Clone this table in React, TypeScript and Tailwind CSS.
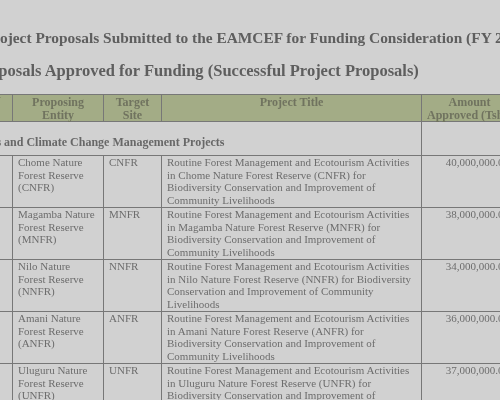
const rows = [
  {
    entity: "Chome Nature Forest Reserve (CNFR)",
    site: "CNFR",
    title:
      "Routine Forest Management and Ecotourism Activities in Chome Nature Forest Reserve (CNFR) for Biodiversity Conservation and Improvement of Community Livelihoods",
    amount: "40,000,000.00",
  },
  {
    entity: "Magamba Nature Forest Reserve (MNFR)",
    site: "MNFR",
    title:
      "Routine Forest Management and Ecotourism Activities in Magamba Nature Forest Reserve (MNFR) for Biodiversity Conservation and Improvement of Community Livelihoods",
    amount: "38,000,000.00",
  },
  {
    entity: "Nilo Nature Forest Reserve (NNFR)",
    site: "NNFR",
    title:
      "Routine Forest Management and Ecotourism Activities in Nilo Nature Forest Reserve (NNFR) for Biodiversity Conservation and Improvement of Community Livelihoods",
    amount: "34,000,000.00",
  },
  {
    entity: "Amani Nature Forest Reserve (ANFR)",
    site: "ANFR",
    title:
      "Routine Forest Management and Ecotourism Activities in Amani Nature Forest Reserve (ANFR) for Biodiversity Conservation and Improvement of Community Livelihoods",
    amount: "36,000,000.00",
  },
  {
    entity: "Uluguru Nature Forest Reserve (UNFR)",
    site: "UNFR",
    title:
      "Routine Forest Management and Ecotourism Activities in Uluguru Nature Forest Reserve (UNFR) for Biodiversity Conservation and Improvement of Community Livelihoods",
    amount: "37,000,000.00",
  },
];

export default function App() {
  return (
    <div className="h-[400px] w-[500px] overflow-hidden bg-[#d1d1d1] font-['Liberation_Serif',serif] text-[#6d6d6d] blur-[0.4px]">
      <h1 className="-ml-[16px] mt-[28px] whitespace-nowrap text-[15.4px] font-bold leading-[20px] text-[#5e5e5e]">
        Project Proposals Submitted to the EAMCEF for Funding Consideration (FY 2023/2024)
      </h1>
      <h2 className="-ml-[27px] mt-[13px] whitespace-nowrap text-[16.5px] font-bold leading-[20px] text-[#5e5e5e]">
        Proposals Approved for Funding (Successful Project Proposals)
      </h2>

      <table className="-ml-[30px] mt-[13px] w-[547px] table-fixed border-collapse text-[11px] leading-[12.65px]">
        <colgroup>
          <col className="w-[42px]" />
          <col className="w-[91px]" />
          <col className="w-[58px]" />
          <col className="w-[260px]" />
          <col className="w-[96px]" />
        </colgroup>
        <thead>
          <tr className="h-[27px] bg-[#a3ac86] text-[12px] leading-[12.5px] text-[#70735f]">
            <th className="border border-[#777] px-1 align-top font-bold">S/N</th>
            <th className="border border-[#777] px-1 pt-[1px] align-top font-bold">
              Proposing Entity
            </th>
            <th className="border border-[#777] px-1 pt-[1px] align-top font-bold">
              Target Site
            </th>
            <th className="border border-[#777] px-1 pt-[1px] align-top font-bold">
              Project Title
            </th>
            <th className="border border-[#777] px-0 pt-[1px] align-top font-bold">
              Amount Approved (Tshs)
            </th>
          </tr>
        </thead>
        <tbody>
          <tr className="h-[34px]">
            <td
              colSpan={4}
              className="border border-[#777] pl-0 pt-[14px] indent-[-7px] align-top text-[12px] font-bold text-[#686868]"
            >
              Forests and Climate Change Management Projects
            </td>
            <td className="border border-[#777]" />
          </tr>
          {rows.map((r, i) => (
            <tr key={r.site} className="h-[52px]">
              <td className="border border-[#777] px-[5px] align-top">{i + 1}.</td>
              <td className="border border-[#777] px-[5px] align-top">{r.entity}</td>
              <td className="border border-[#777] px-[5px] align-top">{r.site}</td>
              <td className="border border-[#777] px-[5px] align-top">{r.title}</td>
              <td className="border border-[#777] pl-[5px] pr-[8px] text-right align-top">
                {r.amount}
              </td>
            </tr>
          ))}
        </tbody>
      </table>
    </div>
  );
}
